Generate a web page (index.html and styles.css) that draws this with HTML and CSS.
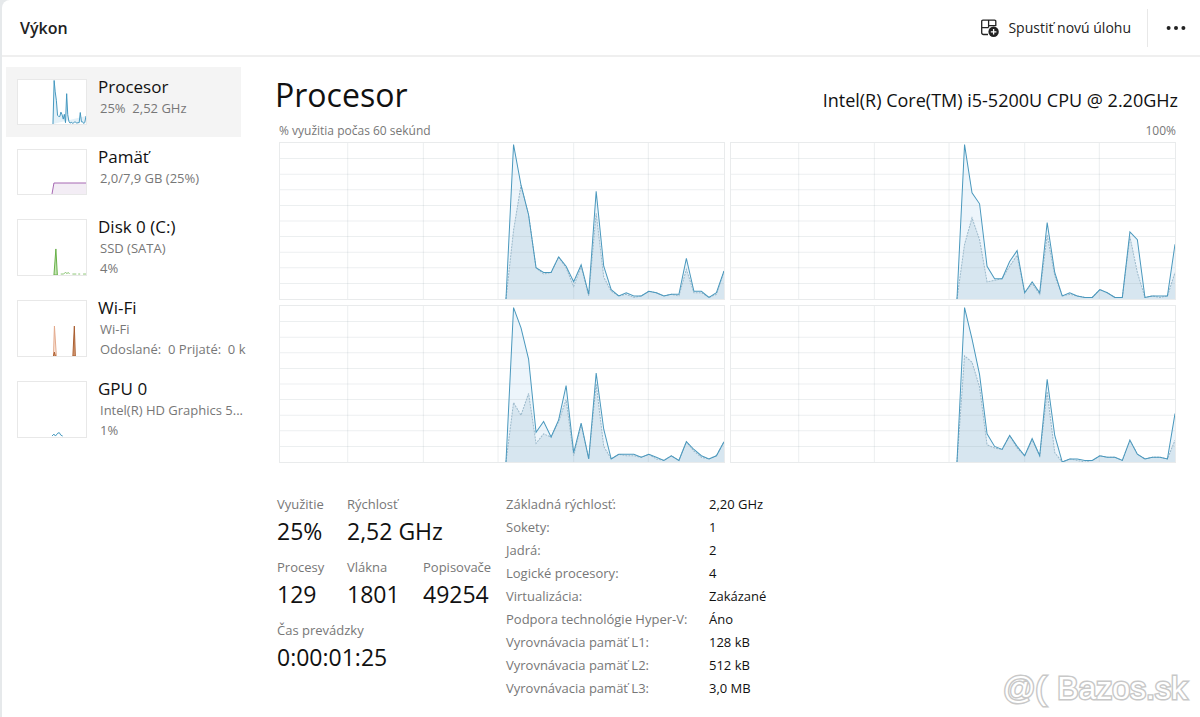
FILE: index.html
```html
<!DOCTYPE html>
<html lang="sk">
<head>
    <meta charset="UTF-8">
    <meta name="viewport" content="width=device-width, initial-scale=1.0">
    <title>Výkon</title>
    <link rel="stylesheet" href="styles.css">
</head>
<body>
    <div class="window">
        <header class="topbar">
            <h1>Výkon</h1>
            <button class="run-task" type="button">
                <svg width="20" height="20" viewBox="0 0 20 20" fill="none" stroke="#222" stroke-width="1.3">
                    <path d="M8 16.5H3.5A1.8 1.8 0 0 1 1.7 14.7V3.4A1.2 1.2 0 0 1 2.9 2.2H14.6A1.2 1.2 0 0 1 15.8 3.4V8M8.6 2.2V9.6M1.7 9.6H8.6M8.6 7.6H15.8"/>
                    <circle cx="13.6" cy="13.8" r="5.2" fill="#222" stroke="none"/>
                    <path d="M13.6 11V16.6M10.8 13.8H16.4" stroke="#fff"/>
                </svg>
                Spustiť novú úlohu
            </button>
            <button class="more" type="button" aria-label="Viac">
                <svg width="20" height="6" viewBox="0 0 20 6" fill="#222">
                    <circle cx="2.6" cy="3" r="2"/><circle cx="10" cy="3" r="2"/><circle cx="17.4" cy="3" r="2"/>
                </svg>
            </button>
        </header>
        <div class="content">
            <nav class="sidebar">
                <button class="item active" type="button">
                    <svg class="thumb" viewBox="0 0 70 46" preserveAspectRatio="none">
                        <polyline id="thumb-cpu" fill="#e4f1f8" stroke="#3f95bd"/>
                    </svg>
                    <span class="text"><span class="name">Procesor</span><span class="sub">25%&nbsp; 2,52 GHz</span></span>
                </button>
                <button class="item" type="button">
                    <svg class="thumb" viewBox="0 0 70 46" preserveAspectRatio="none">
                        <polyline points="35,46 37,34.5 70,34.5 70,46" fill="#f3edf5" stroke="none"/>
                        <polyline points="35,46 37,34.5 70,34.5" fill="none" stroke="#a263b0"/>
                    </svg>
                    <span class="text"><span class="name">Pamäť</span><span class="sub">2,0/7,9 GB (25%)</span></span>
                </button>
                <button class="item" type="button">
                    <svg class="thumb tall" viewBox="0 0 70 57" preserveAspectRatio="none">
                        <path d="M37 57L39 30L40.5 57Z" fill="#c5e5b5" stroke="#63ae43"/>
                        <path d="M44 56H47L49 54L50 55.5L52 54.5L53 56M56 56H60M62 56H64M67 56H70" fill="none" stroke="#8bc473"/>
                    </svg>
                    <span class="text"><span class="name">Disk 0 (C:)</span><span class="sub">SSD (SATA)</span><span class="sub">4%</span></span>
                </button>
                <button class="item" type="button">
                    <svg class="thumb tall" viewBox="0 0 70 57" preserveAspectRatio="none">
                        <path d="M36.5 57L37.5 26L39.5 57Z" fill="#fbe9df" stroke="#e2a88a"/>
                        <path d="M36.5 57L37.5 53L38.5 57M56.5 57L58 26L59 57Z" fill="#dba27e" stroke="#a75a2c"/>
                    </svg>
                    <span class="text"><span class="name">Wi-Fi</span><span class="sub">Wi-Fi</span><span class="sub">Odoslané:&nbsp; 0 Prijaté:&nbsp; 0 k</span></span>
                </button>
                <button class="item" type="button">
                    <svg class="thumb tall" viewBox="0 0 70 57" preserveAspectRatio="none">
                        <path d="M35 56L37 54L38.5 56L41 53L42.5 52.5L44 55L46 56" fill="none" stroke="#3f95bd"/>
                    </svg>
                    <span class="text"><span class="name">GPU 0</span><span class="sub">Intel(R) HD Graphics 5...</span><span class="sub">1%</span></span>
                </button>
            </nav>
            <main>
                <div class="heading">
                    <h2>Procesor</h2>
                    <span class="model">Intel(R) Core(TM) i5-5200U CPU @ 2.20GHz</span>
                </div>
                <div class="scale">
                    <span>% využitia počas 60 sekúnd</span>
                    <span>100%</span>
                </div>
                <div class="charts" id="charts"></div>
                <div class="details">
                    <dl class="stats">
                        <div><dt>Využitie</dt><dd>25%</dd></div>
                        <div class="wide"><dt>Rýchlosť</dt><dd>2,52 GHz</dd></div>
                        <div><dt>Procesy</dt><dd>129</dd></div>
                        <div><dt>Vlákna</dt><dd>1801</dd></div>
                        <div><dt>Popisovače</dt><dd>49254</dd></div>
                        <div class="full"><dt>Čas prevádzky</dt><dd>0:00:01:25</dd></div>
                    </dl>
                    <table class="specs">
                        <tr><th scope="row">Základná rýchlosť:</th><td>2,20 GHz</td></tr>
                        <tr><th scope="row">Sokety:</th><td>1</td></tr>
                        <tr><th scope="row">Jadrá:</th><td>2</td></tr>
                        <tr><th scope="row">Logické procesory:</th><td>4</td></tr>
                        <tr><th scope="row">Virtualizácia:</th><td>Zakázané</td></tr>
                        <tr><th scope="row">Podpora technológie Hyper-V:</th><td>Áno</td></tr>
                        <tr><th scope="row">Vyrovnávacia pamäť L1:</th><td>128 kB</td></tr>
                        <tr><th scope="row">Vyrovnávacia pamäť L2:</th><td>512 kB</td></tr>
                        <tr><th scope="row">Vyrovnávacia pamäť L3:</th><td>3,0 MB</td></tr>
                    </table>
                </div>
            </main>
        </div>
        <div class="watermark"><span>@(</span><span>Bazos.sk</span></div>
    </div>
    <script>
        // využitie a čas jadra v %, jedna dvojica pre každý logický procesor
        const cores = [
            {
                total: [0, 99, 73, 54, 20, 17, 17, 27, 21, 11, 22, 3, 69, 21, 6, 2, 4, 2, 2, 5, 4, 2, 3, 3, 26, 5, 5, 1, 4, 18],
                kernel: [0, 44, 73, 54, 20, 16, 17, 27, 20, 8, 21, 2, 55, 14, 5, 2, 3, 1, 2, 5, 4, 2, 3, 2, 19, 4, 4, 1, 3, 18]
            },
            {
                total: [0, 99, 68, 61, 21, 13, 13, 24, 31, 4, 11, 4, 49, 17, 2, 4, 2, 1, 1, 6, 4, 1, 1, 43, 38, 1, 2, 2, 2, 35],
                kernel: [0, 35, 52, 38, 11, 12, 13, 21, 28, 4, 10, 3, 41, 15, 2, 3, 2, 1, 1, 6, 4, 1, 1, 40, 17, 1, 2, 1, 2, 17]
            },
            {
                total: [0, 99, 86, 66, 19, 26, 16, 27, 49, 6, 25, 2, 57, 21, 2, 5, 5, 5, 3, 5, 3, 1, 4, 1, 13, 8, 4, 2, 4, 13],
                kernel: [0, 38, 30, 44, 12, 18, 16, 26, 40, 4, 24, 2, 50, 10, 2, 5, 4, 4, 3, 5, 2, 1, 4, 1, 13, 7, 3, 2, 4, 13]
            },
            {
                total: [0, 99, 79, 56, 18, 10, 8, 17, 10, 4, 15, 4, 53, 17, 0, 2, 2, 1, 1, 4, 3, 3, 1, 14, 5, 2, 3, 3, 2, 31],
                kernel: [0, 68, 64, 48, 11, 9, 8, 17, 9, 4, 14, 4, 45, 6, 0, 2, 1, 0, 1, 4, 3, 3, 1, 14, 5, 2, 3, 3, 2, 14]
            }
        ];
        function suradnice(values, start, width, height) {
            let step = (width - start) / (values.length - 1);
            return values.map((v, i) => `${(start + i * step).toFixed(1)},${(height - v * height / 100).toFixed(1)}`).join(" ");
        }
        function mriezka() {
            let ciary = "";
            for (let i = 1; i < 10; i++) {
                ciary += `<line class="grid" x1="0" x2="446" y1="${i * 15.7}" y2="${i * 15.7}"/>`;
            }
            [68, 144, 219, 295, 370].forEach(x => {
                ciary += `<line class="grid" x1="${x}" x2="${x}" y1="0" y2="157"/>`;
            });
            return ciary;
        }
        function kresliGrafy() {
            let html = "";
            cores.forEach(core => {
                let total = suradnice(core.total, 227, 446, 157);
                let kernel = suradnice(core.kernel, 227, 446, 157);
                html += `<svg class="chart" viewBox="0 0 446 157" preserveAspectRatio="none">
                    <polygon class="area-total" points="${total} 446,157"/>
                    <polygon class="area-kernel" points="${kernel} 446,157"/>
                    ${mriezka()}
                    <polyline class="line-kernel" points="${kernel}"/>
                    <polyline class="line-total" points="${total}"/>
                </svg>`;
            });
            document.getElementById("charts").innerHTML = html;
        }
        kresliGrafy();
        document.getElementById("thumb-cpu").setAttribute("points", suradnice(cores[0].total, 36, 70, 46));
    </script>
</body>
</html>
```
FILE: styles.css
```css
* {
    box-sizing: border-box;
}
body {
    margin: 0;
    background-color: #e6e9eb;
    font-family: "Open Sans", "Noto Sans", sans-serif;
    font-size: 13px;
    color: #111;
}
h1, h2, dl, dd {
    margin: 0;
    font-weight: 400;
}
button {
    border: none;
    background: none;
    padding: 0;
    font: inherit;
    color: inherit;
}
.window {
    position: relative;
    min-height: 100vh;
    margin-left: 2px;
    background-color: #fff;
    border-top-left-radius: 8px;
}
.topbar {
    display: flex;
    align-items: center;
    height: 57px;
    padding: 0 14px 0 18px;
    border-bottom: 2px solid #efefef;
}
.topbar h1 {
    flex: 1;
    font-size: 16px;
    font-weight: 600;
    color: #222;
}
.run-task {
    display: flex;
    align-items: center;
    gap: 8px;
    font-size: 14px;
    color: #222;
}
.more {
    display: flex;
    align-items: center;
    height: 38px;
    margin-left: 16px;
    padding-left: 18px;
    border-left: 1px solid #e8e8e8;
}
.content {
    display: flex;
}
.sidebar {
    width: 245px;
    padding: 10px 6px 0 4px;
}
.item {
    display: flex;
    align-items: flex-start;
    gap: 11px;
    width: 100%;
    padding: 9px 11px;
    text-align: left;
    white-space: nowrap;
}
.item.active {
    background-color: #f4f4f4;
}
.thumb {
    flex: none;
    width: 70px;
    height: 46px;
    margin: 3px 0;
    background-color: #fff;
    border: 1px solid #e8e8e8;
}
.thumb.tall {
    height: 57px;
}
.name, .sub {
    display: block;
}
.name {
    font-size: 17px;
    line-height: 22px;
}
.sub {
    padding-left: 2px;
    line-height: 20px;
    color: #777;
}
main {
    flex: 1;
    min-width: 0;
    padding: 16px 24px 0 30px;
}
.heading {
    display: flex;
    justify-content: space-between;
    align-items: baseline;
    height: 48px;
    margin: 0 -2px;
}
.heading h2 {
    font-size: 32px;
    line-height: 44px;
}
.model {
    font-size: 18px;
}
.scale {
    display: flex;
    justify-content: space-between;
    padding-left: 2px;
    font-size: 12px;
    line-height: 20px;
    color: #777;
}
.charts {
    display: grid;
    grid-template-columns: 1fr 1fr;
    gap: 5px;
    margin-top: 1px;
    padding-left: 2px;
}
.chart {
    display: block;
    width: 100%;
    height: 158px;
    border: 1px solid #e9ebec;
}
.chart * {
    vector-effect: non-scaling-stroke;
}
.grid {
    stroke: #90a0a8;
    stroke-opacity: 0.17;
}
.area-total {
    fill: #edf5fb;
}
.area-kernel {
    fill: #d7e6f0;
}
.line-total, .line-kernel {
    fill: none;
    stroke: #4a98bd;
    stroke-width: 1;
}
.line-kernel {
    stroke: #9bb9cb;
    stroke-dasharray: 2 1;
}
.details {
    display: flex;
    gap: 11px;
    margin-top: 30px;
}
.stats {
    display: grid;
    grid-template-columns: 70px 76px 72px;
    grid-auto-rows: 63px;
}
.stats .wide {
    grid-column: span 2;
}
.stats .full {
    grid-column: span 3;
}
.stats dt {
    line-height: 22px;
    color: #777;
}
.stats dd {
    font-size: 23px;
    line-height: 32px;
}
.specs {
    align-self: flex-start;
    border-collapse: collapse;
}
.specs th, .specs td {
    height: 23px;
    padding: 0;
    line-height: 23px;
    font-weight: 400;
    text-align: left;
}
.specs th {
    width: 203px;
    color: #777;
}
.watermark {
    position: absolute;
    right: 13px;
    bottom: 9px;
    display: flex;
    gap: 11px;
    font-family: "Liberation Sans", Arial, sans-serif;
    font-size: 32px;
    line-height: 40px;
    color: #fff;
    -webkit-text-stroke: 3px #c8c8c8;
    paint-order: stroke fill;
}
```
